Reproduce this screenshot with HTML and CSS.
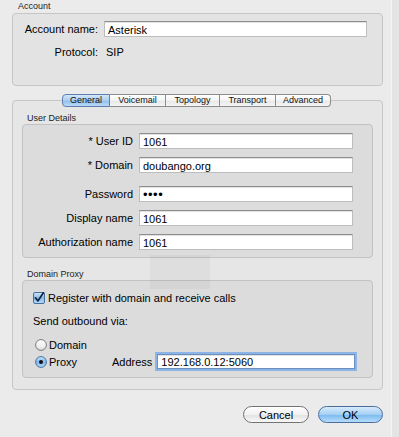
FILE: index.html
```html
<!DOCTYPE html>
<html>
	<head>
		<meta charset="utf-8" />
		<title>Account</title>
		<link rel="stylesheet" href="styles.css">
	</head>
	<body>
		<div class="window">
			<div class="group-title top">Account</div>
			<div class="box account">
				<div class="acc-row">
					<label>Account name:</label>
					<input class="field" type="text" value="Asterisk">
				</div>
				<div class="acc-row second">
					<label>Protocol:</label>
					<span class="value">SIP</span>
				</div>
			</div>

			<div class="tabs">
				<span class="tab selected t-general">General</span>
				<span class="tab t-voice">Voicemail</span>
				<span class="tab t-topo">Topology</span>
				<span class="tab t-trans">Transport</span>
				<span class="tab t-adv">Advanced</span>
			</div>

			<div class="box tabbox">
				<div class="group-title">User Details</div>
				<div class="box inner details">
					<div class="d-row"><label>* User ID</label><input class="field" type="text" value="1061"></div>
					<div class="d-row"><label>* Domain</label><input class="field" type="text" value="doubango.org"></div>
					<div class="d-row pw"><label>Password</label><input class="field dots" type="text" value="&#8226;&#8226;&#8226;&#8226;"></div>
					<div class="d-row"><label>Display name</label><input class="field" type="text" value="1061"></div>
					<div class="d-row"><label>Authorization name</label><input class="field" type="text" value="1061"></div>
				</div>

				<div class="group-title gap">Domain Proxy</div>
				<div class="box inner proxy">
					<div class="check-row">
						<svg class="check" width="12" height="12" viewBox="0 0 12 12">
							<defs>
								<linearGradient id="cb" x1="0" y1="0" x2="0" y2="1">
									<stop offset="0" stop-color="#d2e7fb"/>
									<stop offset="0.5" stop-color="#86bbec"/>
									<stop offset="1" stop-color="#b7dcfb"/>
								</linearGradient>
							</defs>
							<rect x="0.5" y="0.5" width="11" height="11" rx="1.5" fill="url(#cb)" stroke="#44709f"/>
							<path d="M2.4 5.8 L4.9 8.9 L10.4 0.8" fill="none" stroke="#15233a" stroke-width="1.7" stroke-linecap="round" stroke-linejoin="round"/>
						</svg>
						<span>Register with domain and receive calls</span>
					</div>
					<div class="send">Send outbound via:</div>
					<div class="radio-row">
						<svg class="radio" width="12" height="12" viewBox="0 0 12 12">
							<defs>
								<linearGradient id="ro" x1="0" y1="0" x2="0" y2="1">
									<stop offset="0" stop-color="#ffffff"/>
									<stop offset="0.6" stop-color="#f0f0f0"/>
									<stop offset="1" stop-color="#d8d8d8"/>
								</linearGradient>
							</defs>
							<circle cx="6" cy="6" r="5.4" fill="url(#ro)" stroke="#7a7a7a"/>
						</svg>
						<span>Domain</span>
					</div>
					<div class="radio-row proxy-row">
						<span class="choice">
							<svg class="radio" width="12" height="12" viewBox="0 0 12 12">
								<defs>
									<linearGradient id="rb" x1="0" y1="0" x2="0" y2="1">
										<stop offset="0" stop-color="#cfe6fb"/>
										<stop offset="0.5" stop-color="#7fb7ec"/>
										<stop offset="1" stop-color="#b5dbfb"/>
									</linearGradient>
								</defs>
								<circle cx="6" cy="6" r="5.4" fill="url(#rb)" stroke="#44709f"/>
								<circle cx="6" cy="6" r="2" fill="#111"/>
							</svg>
							<span>Proxy</span>
						</span>
						<label class="addr-label">Address</label>
						<input class="field focus" type="text" value="192.168.0.12:5060">
					</div>
				</div>
			</div>

			<div class="buttons">
				<button class="btn">Cancel</button>
				<button class="btn default">OK</button>
			</div>

			<div class="ghost"></div>
		</div>
		<div class="edge"></div>
	</body>
</html>
```

FILE: styles.css
```css
*{
	margin: 0;
	padding: 0;
	box-sizing: border-box;
}

body{
	display: flex;
	width: 399px;
	height: 437px;
	overflow: hidden;
	background: #ebebeb;
	font-family: "Liberation Sans", Arial, sans-serif;
	font-size: 11px;
	color: #000;
}

.window{
	flex: 1;
	position: relative;
}

.edge{
	width: 8px;
	background: #e4e4e4;
	border-left: 1px solid #f5f5f5;
}

.group-title{
	height: 12px;
	line-height: 12px;
	font-size: 9px;
	color: #222;
	padding-left: 5px;
}

.group-title.top{
	height: 13px;
	line-height: 13px;
	padding-left: 18px;
}

.group-title.gap{
	margin-top: 10px;
}

.box{
	border: 1px solid #c6c6c6;
	border-radius: 4px;
	background: #e3e3e3;
}

/* account */
.account{
	margin: 0 8px 0 12px;
	height: 73px;
	padding-top: 7px;
}

.acc-row{
	display: flex;
	align-items: center;
	height: 16px;
}

.acc-row.second{
	margin-top: 7px;
}

.acc-row label{
	width: 85px;
	text-align: right;
	margin-right: 6px;
}

.acc-row .field{
	width: 263px;
}

.value{
	margin-left: 2px;
}

.field{
	height: 16px;
	border: 1px solid #bdbdbd;
	border-top-color: #8e8e8e;
	box-shadow: inset 0 1px 0 #e2e2e2;
	background: #fff;
	font-family: "Liberation Sans", Arial, sans-serif;
	font-size: 11px;
	color: #000;
	padding: 1px 3px 0;
	outline: none;
}

.field.dots{
	font-size: 13px;
	line-height: 12px;
	letter-spacing: 0.5px;
	padding-top: 0;
}

.field.focus{
	box-shadow: 0 0 0 2px #8cb4e4, inset 0 1px 0 #e2e2e2;
	border-color: #6d8fbf;
}

/* tabs */
.tabs{
	display: flex;
	margin-top: 8px;
	padding-left: 62px;
	position: relative;
	z-index: 1;
}

.tab{
	height: 13px;
	line-height: 11px;
	font-size: 9px;
	text-align: center;
	color: #111;
	border: 1px solid #8c8c8c;
	border-left: none;
	background: linear-gradient(#ffffff, #f3f3f3 50%, #e6e6e6 51%, #f6f6f6);
}

.t-general{ width: 48px; border-left: 1px solid #5f7fae; border-radius: 4px 0 0 4px; }
.t-voice{ width: 56px; }
.t-topo{ width: 54px; }
.t-trans{ width: 56px; }
.t-adv{ width: 55px; border-radius: 0 4px 4px 0; }

.tab.selected{
	border-color: #5f7fae;
	background: linear-gradient(#d3e7fa, #a9cdf1 50%, #8fbcec 51%, #b9dbfa);
}

.tabbox{
	margin: -7px 8px 0 12px;
	height: 290px;
	padding: 11px 9px 0;
	background: #e6e6e6;
}

.inner{
	background: #dcdcdc;
	border-color: #c2c2c2;
}

/* user details */
.details{
	height: 134px;
	padding-top: 8px;
}

.d-row{
	display: flex;
	align-items: center;
	height: 16px;
	margin-top: 8px;
}

.d-row:first-child{
	margin-top: 0;
}

.d-row.pw{
	margin-top: 13px;
}

.d-row label{
	width: 110px;
	text-align: right;
	margin-right: 6px;
}

.d-row .field{
	width: 214px;
}

/* domain proxy */
.proxy{
	height: 98px;
	padding: 10px 0 0 10px;
}

.check-row{
	display: flex;
	align-items: center;
	height: 14px;
}

.check{
	margin-right: 3px;
}

.send{
	height: 14px;
	line-height: 14px;
	margin-top: 9px;
}

.radio-row{
	display: flex;
	align-items: center;
	height: 14px;
	margin-top: 10px;
	padding-left: 2px;
}

.radio{
	margin-right: 2px;
}

.proxy-row{
	height: 17px;
	margin-top: 1px;
}

.choice{
	display: flex;
	align-items: center;
	width: 77px;
}

.addr-label{
	margin-right: 5px;
}

.proxy-row .field{
	width: 198px;
	height: 15px;
}

/* buttons */
.buttons{
	display: flex;
	justify-content: flex-end;
	margin: 16px 8px 0 0;
}

.btn{
	height: 17px;
	border: 1px solid #727272;
	border-radius: 9px;
	background: linear-gradient(#ffffff, #f1f1f1 50%, #e1e1e1 51%, #f8f8f8);
	font-family: "Liberation Sans", Arial, sans-serif;
	font-size: 11px;
	color: #000;
	width: 66px;
	margin-left: 9px;
}

.btn.default{
	width: 65px;
	border-color: #4a6d9c;
	background: linear-gradient(#d7ebfc, #a4cff4 50%, #7ab9ee 51%, #b4dcfc);
}

.ghost{
	position: absolute;
	left: 150px;
	top: 255px;
	width: 60px;
	height: 34px;
	background: rgba(0, 0, 0, 0.03);
}
```
